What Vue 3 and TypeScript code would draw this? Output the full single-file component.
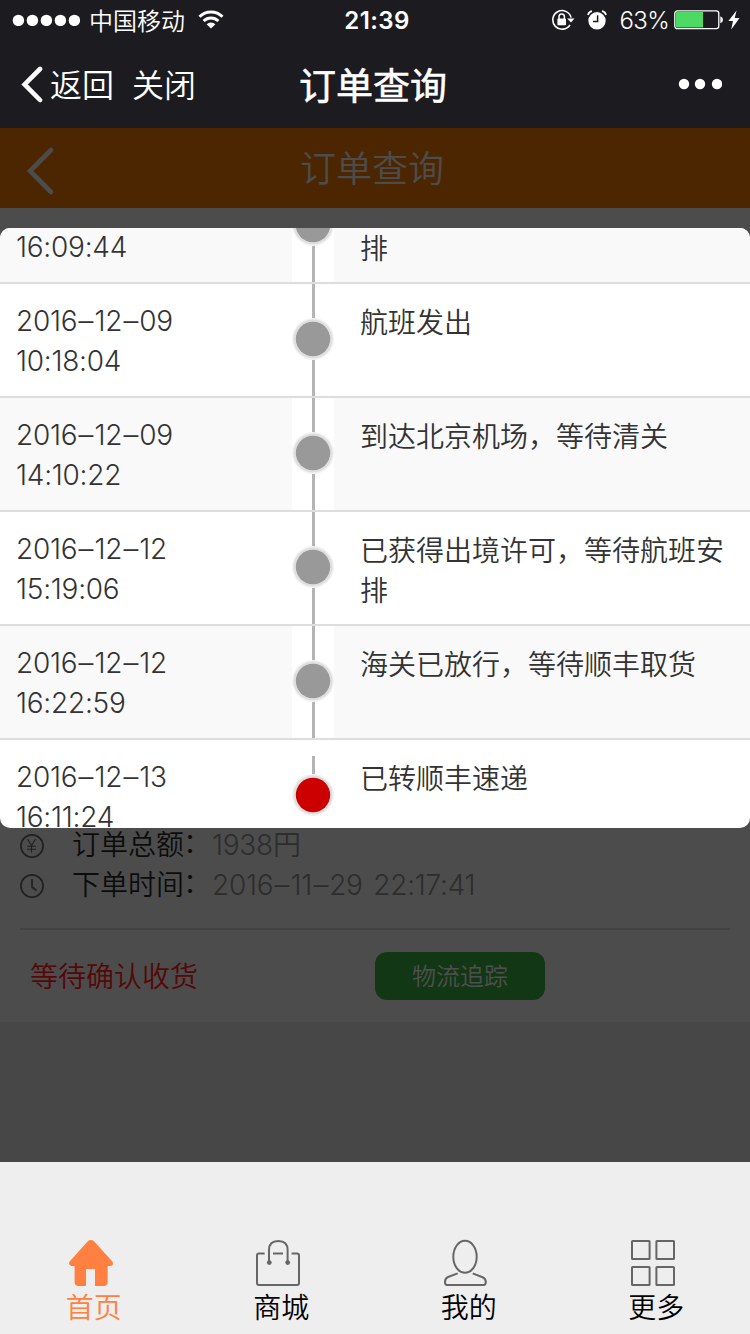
<script setup lang="ts">
interface TrackRow {
  date: string[]
  time: string
  text: string
  current?: boolean
}

const first = { time: '16:09:44', text: '排' }

const rows: TrackRow[] = [
  { date: ['2016', '12', '09'], time: '10:18:04', text: '航班发出' },
  { date: ['2016', '12', '09'], time: '14:10:22', text: '到达北京机场，等待清关' },
  { date: ['2016', '12', '12'], time: '15:19:06', text: '已获得出境许可，等待航班安排' },
  { date: ['2016', '12', '12'], time: '16:22:59', text: '海关已放行，等待顺丰取货' },
  { date: ['2016', '12', '13'], time: '16:11:24', text: '已转顺丰速递', current: true },
]
</script>

<template>
  <div class="screen">
    <header class="status">
      <svg class="signal" width="68" height="12" viewBox="0 0 68 12" fill="#fff">
        <circle v-for="i in 5" :key="i" :cx="i * 14 - 7.6" cy="6.4" r="5.7" />
      </svg>
      <span class="carrier">中国移动</span>
      <svg class="wifi" width="26" height="20" viewBox="0 0 26 20">
        <g fill="none" stroke="#fff" stroke-width="3">
          <path d="M1.5 6.8 A16.4 16.4 0 0 1 24.5 6.8" />
          <path d="M5.6 11 A10.6 10.6 0 0 1 20.4 11" />
        </g>
        <path d="M8.6 14.2 A6.4 6.4 0 0 1 17.4 14.2 L13 18.6 Z" fill="#fff" />
      </svg>
      <span class="clock">21:39</span>
      <div class="status-right">
        <svg width="24" height="22" viewBox="0 0 24 22">
          <path d="M19 15.8 A9.3 9.3 0 1 1 20.1 8.6" fill="none" stroke="#fff" stroke-width="1.6" />
          <path d="M16.2 9.5 H23.6 L19.9 13.6 Z" fill="#fff" />
          <rect x="6.4" y="9.6" width="8.6" height="6.6" rx="0.8" fill="#fff" />
          <path d="M8 10 V7.8 a2.7 2.7 0 0 1 5.4 0 V10" fill="none" stroke="#fff" stroke-width="1.5" />
        </svg>
        <svg class="alarm" width="20" height="20" viewBox="0 0 20 20">
          <circle cx="10" cy="10.8" r="8.7" fill="#fff" />
          <path d="M10.6 5.2 V11.6 H6" fill="none" stroke="#1c1b20" stroke-width="1.5" />
          <path d="M1 5 A5 5 0 0 1 5 1.2 M15 1.2 A5 5 0 0 1 19 5" fill="none" stroke="#fff" stroke-width="1.7" />
        </svg>
        <span class="percent">63%</span>
        <svg class="battery" width="50" height="20" viewBox="0 0 50 20">
          <rect x="0.8" y="0.9" width="44" height="17.8" rx="2.6" fill="none" stroke="#fff" stroke-width="1.3" />
          <path d="M2 3 q0 -1 1 -1 H29 V17.6 H3 q-1 0 -1 -1 Z" fill="#4cd964" />
          <path d="M46.3 6.3 q2.7 1 2.7 3.5 t-2.7 3.5 Z" fill="#fff" />
        </svg>
        <svg class="bolt" width="12" height="20" viewBox="0 0 12 20">
          <path d="M8.6 0.5 L0.4 11 H5 L3.2 19.5 L11.6 8 H6.7 Z" fill="#fff" />
        </svg>
      </div>
    </header>

    <nav class="nav">
      <svg class="nav-back" width="24" height="38" viewBox="0 0 24 38">
        <path d="M20 4 L4.6 19.4 L20 35" fill="none" stroke="#fff" stroke-width="4.6" stroke-linecap="round" />
      </svg>
      <span class="nav-link back">返回</span>
      <span class="nav-link">关闭</span>
      <h1 class="nav-title">订单查询</h1>
      <svg class="more" width="44" height="12" viewBox="0 0 44 12" fill="#fff">
        <circle cx="6" cy="6" r="5.2" />
        <circle cx="22" cy="6" r="5.2" />
        <circle cx="39" cy="6" r="5.2" />
      </svg>
    </nav>

    <div class="bar">
      <svg class="bar-back" width="30" height="50" viewBox="0 0 30 50">
        <path d="M25 4 L4 25 L25 46" fill="none" stroke="#4c4c4c" stroke-width="4.6" stroke-linecap="round" />
      </svg>
      <h2 class="bar-title">订单查询</h2>
    </div>

    <main class="body">
      <section class="order">
        <div class="info">
          <svg width="24" height="24" viewBox="0 0 24 24" fill="none" stroke="#202020">
            <circle cx="12" cy="12" r="11.1" stroke-width="1.7" />
            <path d="M7.5 5 L11.5 11.6 L15.5 5 M11.5 11.6 V18.6 M7 12.2 H16 M7 15.2 H16" stroke-width="1.1" />
          </svg>
          <span class="label">订单总额<span class="colon">：</span></span>
          <span class="value amount">1938<span class="yen">円</span></span>
        </div>
        <div class="info">
          <svg width="24" height="24" viewBox="0 0 24 24" fill="none" stroke="#202020">
            <circle cx="12" cy="12" r="11.1" stroke-width="1.7" />
            <path d="M12 5 V13 L16.5 16.5" stroke-width="1.7" />
          </svg>
          <span class="label">下单时间<span class="colon">：</span></span>
          <span class="value">2016<span class="dash">–</span>11<span class="dash">–</span>29 22:17:41</span>
        </div>
        <div class="actions">
          <span class="state">等待确认收货</span>
          <button class="track-btn">物流追踪</button>
        </div>
      </section>

      <div class="modal">
        <div class="row partial">
          <div class="when">{{ first.time }}</div>
          <div class="rail">
            <i class="line"></i>
            <svg class="dot" width="42" height="42" viewBox="0 0 42 42">
              <circle cx="21" cy="21" r="21" fill="#f2f2f2" />
              <circle cx="21" cy="21" r="19.6" fill="#dfdfdf" />
              <circle cx="21" cy="21" r="17.2" fill="#999" />
            </svg>
          </div>
          <div class="what">{{ first.text }}</div>
        </div>
        <div v-for="(r, i) in rows" :key="i" class="row" :class="{ odd: i % 2 === 1, last: r.current }">
          <div class="when">
            <template v-for="(part, k) in r.date" :key="k"><span v-if="k" class="dash">–</span>{{ part }}</template><br />{{ r.time }}
          </div>
          <div class="rail">
            <i class="line"></i>
            <svg class="dot" width="42" height="42" viewBox="0 0 42 42">
              <circle cx="21" cy="21" r="21" fill="#f2f2f2" />
              <circle cx="21" cy="21" r="19.6" fill="#dfdfdf" />
              <circle cx="21" cy="21" r="17.2" :fill="r.current ? '#c00' : '#999'" />
            </svg>
          </div>
          <div class="what">{{ r.text }}</div>
        </div>
      </div>
    </main>

    <footer class="tabs">
      <a class="tab active">
        <svg width="48" height="48" viewBox="0 0 48 48" fill="#ff8040">
          <path d="M20.8 2.2 Q24 -0.2 27 2.2 L45.4 22.6 Q47 26 44 27 H40.6 V43 Q40.6 47 36.6 47 H28 V30 H19 V47 H11.5 Q7.6 47 7.6 43 V27 H4.4 Q1 26 2.6 22.6 Z" />
        </svg>
        <span>首页</span>
      </a>
      <a class="tab">
        <svg width="48" height="48" viewBox="0 0 48 48" fill="none" stroke="#666" stroke-width="2">
          <path d="M10.6 14.4 H5 Q3 14.4 3 16.4 V44 Q3 46 5 46 H43 Q45 46 45 44 V16.4 Q45 14.4 43 14.4 H37.6 M19 14.4 H29" />
          <path d="M15 23 V11 Q15 2 24.3 2 T33.6 11 V23" />
          <circle cx="15.3" cy="23.6" r="2.4" fill="#666" stroke="none" />
          <circle cx="33.7" cy="23.6" r="2.4" fill="#666" stroke="none" />
        </svg>
        <span>商城</span>
      </a>
      <a class="tab">
        <svg width="48" height="48" viewBox="0 0 48 48" fill="none" stroke="#666" stroke-width="2">
          <ellipse cx="23" cy="17.8" rx="11.7" ry="16" />
          <path d="M15.7 34.4 L6 38 Q3 39.2 3 43 Q3 46 5 46 H41.6 Q43.8 46 43.8 43 Q43.8 39.4 40.6 38.2 L30.7 34.4" />
        </svg>
        <span>我的</span>
      </a>
      <a class="tab">
        <svg width="48" height="48" viewBox="0 0 48 48" fill="none" stroke="#666" stroke-width="2">
          <rect x="3" y="2" width="17.6" height="18" rx="0.6" />
          <rect x="27.4" y="2" width="17.6" height="18" rx="0.6" />
          <rect x="3" y="28" width="17.6" height="18" rx="0.6" />
          <rect x="27.4" y="28" width="17.6" height="18" rx="0.6" />
        </svg>
        <span>更多</span>
      </a>
    </footer>
  </div>
</template>

<style>
body {
  margin: 0;
}
</style>

<style scoped>
.screen {
  width: 750px;
  height: 1334px;
  display: flex;
  flex-direction: column;
  overflow: hidden;
  background: #474747;
  font-family: Inter, "Noto Sans CJK SC", sans-serif;
  font-weight: 350;
  white-space: nowrap;
}
svg {
  display: block;
  flex: none;
}
h1,
h2 {
  margin: 0;
}
.status {
  position: relative;
  height: 40px;
  display: flex;
  align-items: center;
  background: #1c1b20;
  color: #fff;
}
.signal {
  margin-left: 12px;
}
.carrier {
  margin-left: 9px;
  padding-top: 4px;
  width: 100px;
  font-size: 24px;
  line-height: 36px;
}
.wifi {
  margin-left: 9px;
}
.clock {
  position: absolute;
  left: 0;
  right: 0;
  margin-left: 4px;
  text-align: center;
  font-size: 24px;
  font-weight: 600;
  letter-spacing: 0.4px;
  line-height: 41px;
}
.status-right {
  margin-left: auto;
  margin-right: 10px;
  display: flex;
  align-items: center;
}
.alarm {
  margin-left: 12px;
}
.percent {
  margin-left: 13px;
  padding-top: 1px;
  width: 54.5px;
  font-size: 24px;
  letter-spacing: -0.6px;
  line-height: 40px;
}
.bolt {
  margin-left: 4px;
}
.nav {
  position: relative;
  height: 88px;
  display: flex;
  align-items: center;
  background: #1c1b20;
  color: #fff;
}
.nav-back {
  margin-left: 20px;
}
.nav-link {
  padding-top: 4px;
  font-size: 32px;
  line-height: 84px;
}
.nav-link.back {
  margin-left: 6px;
  margin-right: 18px;
}
.nav-title {
  position: absolute;
  left: 299px;
  top: 3px;
  font-size: 37px;
  font-weight: 400;
  -webkit-text-stroke: 0.6px #fff;
  line-height: 88px;
}
.more {
  margin-left: auto;
  margin-right: 28px;
}
.bar {
  position: relative;
  height: 80px;
  display: flex;
  align-items: center;
  justify-content: center;
  background: #4c2600;
}
.bar-back {
  position: absolute;
  left: 26px;
  top: 18px;
}
.bar-title {
  margin-right: 6px;
  padding-top: 2px;
  font-size: 36px;
  font-weight: 350;
  line-height: 78px;
  color: #4c4c4c;
}
.body {
  position: relative;
  height: 954px;
}
.order {
  box-sizing: border-box;
  height: 814px;
  padding-top: 617px;
  background: #4c4c4c;
  font-size: 28px;
}
.info {
  height: 40px;
  display: flex;
  align-items: center;
  padding-left: 20px;
  line-height: 40px;
}
.info svg {
  margin-top: 2px;
}
.label {
  margin-left: 28px;
  width: 140px;
  color: #0c0c0c;
}
.colon {
  display: inline-block;
  transform: translate(-1px, -2px);
}
.value {
  color: #2d2d2d;
  letter-spacing: -0.25px;
  word-spacing: 3px;
}
.amount {
  margin-top: -2px;
}
.yen {
  font-family: "Noto Sans CJK JP", sans-serif;
}
.dash {
  display: inline-block;
  margin: 0 1.7px;
  transform: scaleX(1.06);
}
.actions {
  margin: 23px 20px 0;
  border-top: 2px solid #424242;
  padding: 22px 10px 0;
  display: flex;
  align-items: center;
  line-height: 48px;
}
.state {
  padding-top: 2px;
  width: 345px;
  line-height: 46px;
  color: #540808;
}
.track-btn {
  width: 170px;
  height: 48px;
  padding: 2px 0 0;
  border: 0;
  border-radius: 12px;
  background: #123715;
  color: #4f4f4f;
  font: inherit;
  font-size: 24px;
  line-height: 46px;
}
.modal {
  position: absolute;
  left: 0;
  top: 20px;
  width: 750px;
  height: 600px;
  overflow: hidden;
  border-radius: 10px;
  background: #fff;
  color: #333;
  font-size: 28px;
  line-height: 40px;
}
.row {
  box-sizing: border-box;
  height: 114px;
  display: grid;
  grid-template-columns: 292px 42px 1fr;
  border-bottom: 2px solid #ddd;
}
.partial {
  height: 56px;
}
.odd,
.partial {
  background: #f9f9f9;
}
.when {
  padding: 17px 0 0 16px;
  letter-spacing: -0.25px;
}
.what {
  padding: 19px 16px 0 26px;
  white-space: normal;
}
.partial .when {
  padding-top: 0;
  margin-top: -1px;
}
.partial .what {
  padding-top: 1px;
}
.rail {
  position: relative;
  background: #fff;
}
.line {
  position: absolute;
  left: 19.7px;
  top: 0;
  bottom: 0;
  width: 3px;
  background: #b4b4b4;
}
.dot {
  position: absolute;
  left: 0;
  top: 34px;
}
.partial .dot {
  top: -24px;
}
.last .line {
  top: 16px;
  bottom: 40px;
}
.tabs {
  height: 172px;
  display: flex;
  background: #eee;
}
.tab {
  width: 187.5px;
  display: flex;
  flex-direction: column;
  align-items: center;
  padding-top: 77px;
  color: #000;
  font-size: 28px;
  line-height: 40px;
}
.tab svg {
  margin-right: 6px;
}
.tab span {
  margin-top: 1px;
}
.tab.active {
  color: #ff8040;
}
</style>
